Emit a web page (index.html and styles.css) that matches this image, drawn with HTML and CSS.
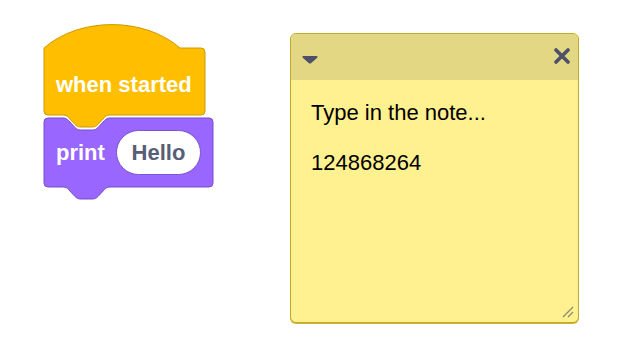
FILE: index.html
```html
<!DOCTYPE html>
<html lang="en">
<head>
<meta charset="utf-8">
<title>Blocks workspace</title>
<link rel="stylesheet" href="styles.css">
</head>
<body>
<div class="workspace">
  <svg class="stack" width="220" height="210" viewBox="0 0 220 210" xmlns="http://www.w3.org/2000/svg">
    <path class="block-looks" d="M 44,122 a4,4 0 0 1 4,-4 H 63 C 66,118 67,119 68.5,120.5 L 75,127.5 C 76.5,129 78,130 80.5,130 H 92.5 C 95,130 96.5,129 98,127.5 L 104.5,120.5 C 106,119 107,118 110,118 H 209 a4,4 0 0 1 4,4 V 183 a4,4 0 0 1 -4,4 H 110 C 107,187 106,188 104.5,189.5 L 98,196.5 C 96.5,198 95,199 92.5,199 H 80.5 C 78,199 76.5,198 75,196.5 L 68.5,189.5 C 67,188 66,187 63,187 H 48 a4,4 0 0 1 -4,-4 Z"/>
    <path class="block-event" d="M 44,48 C 79.4,16.8 144.6,16.8 180,48 H 201 a4,4 0 0 1 4,4 V 111 a4,4 0 0 1 -4,4 H 110 C 107,115 106,116 104.5,117.5 L 98,124.5 C 96.5,126 95,127 92.5,127 H 80.5 C 78,127 76.5,126 75,124.5 L 68.5,117.5 C 67,116 66,115 63,115 H 48 a4,4 0 0 1 -4,-4 Z"/>
    <text class="block-label" x="56" y="92">when started</text>
    <text class="block-label" x="56" y="160">print</text>
    <rect class="pill" x="116.5" y="130.5" width="84" height="44" rx="22" ry="22"/>
    <text class="pill-label" x="158.5" y="160" text-anchor="middle">Hello</text>
  </svg>

  <div class="note">
    <div class="note-header">
      <svg class="caret" width="16" height="9" viewBox="0 0 16 9" xmlns="http://www.w3.org/2000/svg">
        <path d="M 1.5,1 H 14.5 C 15.6,1 16,2 15.2,2.8 L 9,8.2 C 8.4,8.7 7.6,8.7 7,8.2 L 0.8,2.8 C 0,2 0.4,1 1.5,1 Z"/>
      </svg>
      <svg class="close" width="16" height="16" viewBox="0 0 16 16" xmlns="http://www.w3.org/2000/svg">
        <path d="M 2,2 L 14,14 M 14,2 L 2,14"/>
      </svg>
    </div>
    <div class="note-body">
      <p class="note-line">Type in the note...</p>
      <p class="note-line">124868264</p>
      <svg class="resize" width="14" height="14" viewBox="0 0 14 14" xmlns="http://www.w3.org/2000/svg">
        <path d="M 2,12 L 12,2 M 7,12 L 12,7"/>
      </svg>
    </div>
  </div>
</div>
</body>
</html>
```

FILE: styles.css
```css
html, body {
  margin: 0;
  padding: 0;
  background: #ffffff;
}

.workspace {
  display: flex;
  align-items: flex-start;
  width: 636px;
  height: 362px;
  font-family: "Liberation Sans", Arial, sans-serif;
}

.stack {
  display: block;
  flex: none;
}

.block-event {
  fill: #ffbf00;
  stroke: #cf9a00;
  stroke-width: 1;
}

.block-looks {
  fill: #9966ff;
  stroke: #774dcb;
  stroke-width: 1;
}

.block-label {
  font-family: "Liberation Sans", Arial, sans-serif;
  font-weight: 700;
  font-size: 22px;
  fill: #ffffff;
}

.pill {
  fill: #ffffff;
  stroke: #7a55d0;
  stroke-width: 1;
}

.pill-label {
  font-family: "Liberation Sans", Arial, sans-serif;
  font-weight: 700;
  font-size: 22px;
  fill: #575e75;
}

.note {
  flex: none;
  margin-left: 70px;
  margin-top: 33px;
  width: 289px;
  height: 290px;
  box-sizing: border-box;
  border: 1px solid #c1aa2a;
  border-radius: 6px;
  box-shadow: 0 1px 0 #c9b32e;
  background: #fff18f;
  display: flex;
  flex-direction: column;
  overflow: hidden;
}

.note-header {
  flex: none;
  height: 46px;
  background: #e4d784;
  display: flex;
  align-items: center;
  justify-content: space-between;
  padding: 0 8px 0 11px;
}

.caret {
  display: block;
  margin-top: 5px;
}

.caret path {
  fill: #4c5068;
}

.close {
  display: block;
  margin-top: -2px;
}

.close path {
  stroke: #4c5068;
  stroke-width: 3.6;
  stroke-linecap: round;
  fill: none;
}

.note-body {
  flex: 1;
  position: relative;
  padding: 20px 20px 0 20px;
}

.note-line {
  margin: 0 0 25px 0;
  font-size: 22px;
  line-height: 25px;
  color: #000000;
}

.resize {
  position: absolute;
  right: 3px;
  bottom: 3px;
  display: block;
}

.resize path {
  stroke: #8c8a76;
  stroke-width: 1.3;
  fill: none;
}
```
